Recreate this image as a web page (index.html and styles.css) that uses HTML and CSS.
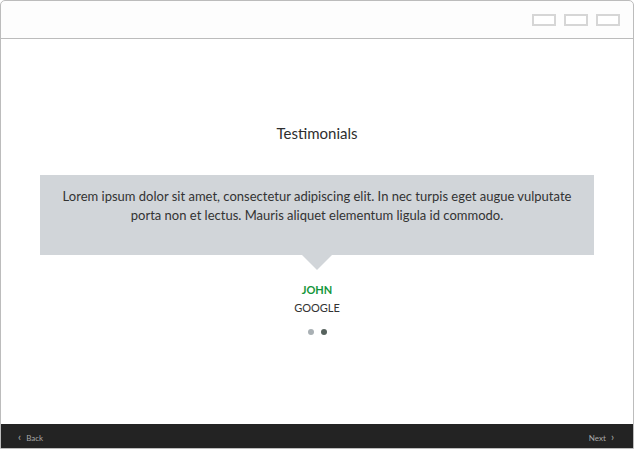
FILE: index.html
```html
<!DOCTYPE html>
<html>
<head>
    <title>Testimonials</title>
    <link rel="stylesheet" href="styles.css">
</head>
<body>
    <div class="frame">
        <div class="topbar">
            <span class="winbtn"></span>
            <span class="winbtn"></span>
            <span class="winbtn"></span>
        </div>

        <div class="content">
            <h1 class="title">Testimonials</h1>
            <div class="quote">
                <p>Lorem ipsum dolor sit amet, consectetur adipiscing elit. In nec turpis eget augue vulputate porta non et lectus. Mauris aliquet elementum ligula id commodo.</p>
            </div>
            <div class="author">
                <div class="name">JOHN</div>
                <div class="company">GOOGLE</div>
            </div>
            <div class="dots">
                <span class="dot"></span>
                <span class="dot active"></span>
            </div>
        </div>

        <div class="navbar">
            <a href="#" class="nav-link"><span class="chev">&lsaquo;</span> Back</a>
            <a href="#" class="nav-link">Next <span class="chev">&rsaquo;</span></a>
        </div>
    </div>
</body>
</html>
```

FILE: styles.css
```css
    body {
        margin: 0;
        padding: 0;
        background-color: #ffffff;
        font-family: Lato, "Noto Sans", sans-serif;
    }
    .frame {
        box-sizing: border-box;
        width: 634px;
        height: 449px;
        border: 1px solid #bcbcbc;
        border-radius: 5px 5px 0 0;
        display: flex;
        flex-direction: column;
        background-color: #fdfdfd;
    }
    .topbar {
        height: 37px;
        border-bottom: 1px solid #bcbcbc;
        display: flex;
        justify-content: flex-end;
        align-items: center;
        gap: 8px;
        padding-right: 13px;
    }
    .winbtn {
        box-sizing: border-box;
        width: 24px;
        height: 12px;
        border: 2px solid #d6d6d6;
        background-color: #ffffff;
    }
    .content {
        flex: 1;
        display: flex;
        flex-direction: column;
        align-items: center;
        background-color: #ffffff;
    }
    .title {
        margin: 84px 0 0;
        font-size: 15px;
        font-weight: normal;
        color: #2e2e2e;
        line-height: 20px;
    }
    .quote {
        position: relative;
        box-sizing: border-box;
        width: 554px;
        height: 80px;
        margin-top: 32px;
        background-color: #d1d5d9;
        padding: 12px 10px;
        text-align: center;
    }
    .quote p {
        margin: 0;
        font-size: 13px;
        line-height: 19px;
        color: #333333;
    }
    .quote:after {
        content: "";
        position: absolute;
        left: 50%;
        bottom: -15px;
        margin-left: -15px;
        border-left: 15px solid transparent;
        border-right: 15px solid transparent;
        border-top: 15px solid #d1d5d9;
    }
    .author {
        margin-top: 26px;
        text-align: center;
        font-size: 11px;
        line-height: 18px;
    }
    .name {
        color: #13963a;
        font-weight: bold;
    }
    .company {
        color: #333333;
    }
    .dots {
        display: flex;
        gap: 7px;
        margin-top: 12px;
    }
    .dot {
        width: 6px;
        height: 6px;
        border-radius: 50%;
        background-color: #a9b0b4;
    }
    .dot.active {
        background-color: #56625d;
    }
    .navbar {
        height: 24px;
        background-color: #232323;
        display: flex;
        justify-content: space-between;
        align-items: center;
        padding: 0 16px 0 14px;
    }
    .nav-link {
        color: #a8a8a8;
        font-size: 8px;
        text-decoration: none;
    }
    .chev {
        font-size: 11px;
        margin: 0 3px;
    }
```
